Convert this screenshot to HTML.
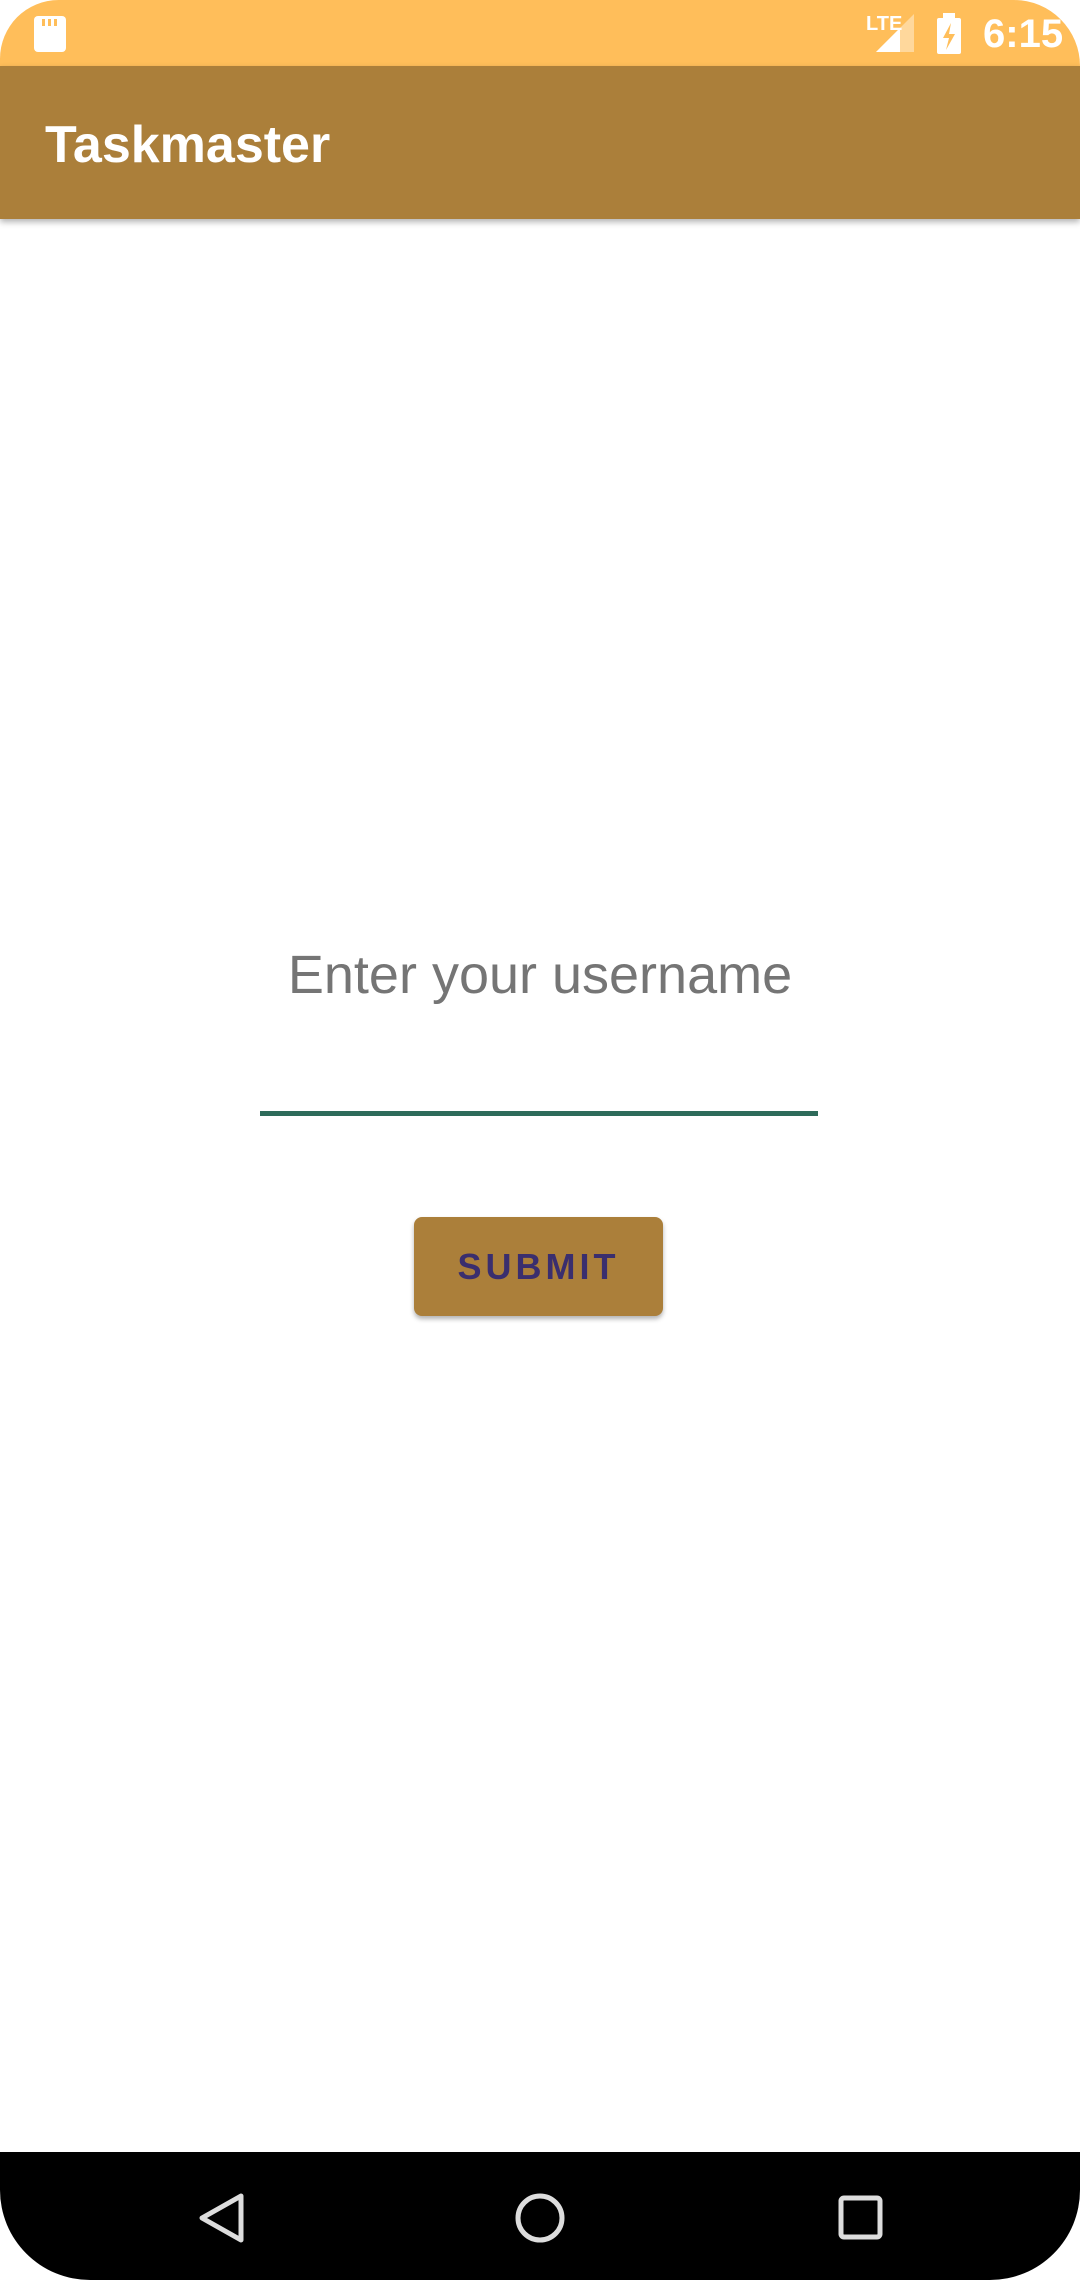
<!DOCTYPE html>
<html><head><meta charset="utf-8"><style>
html,body{margin:0;padding:0;background:#fff;}
body{width:1080px;height:2280px;position:relative;overflow:hidden;font-family:"Liberation Sans",sans-serif;}
.status{position:absolute;left:0;top:0;width:1080px;height:66px;background:#ffbe5a;border-radius:80px 90px 0 0;overflow:hidden;}
.appbar{position:absolute;left:0;top:66px;width:1080px;height:153px;background:#ab7f3a;box-shadow:0 3px 6px rgba(0,0,0,0.3);}
.title{position:absolute;left:45px;top:115px;color:#fff;font-size:52px;font-weight:bold;line-height:60px;}
.hint{position:absolute;left:0;width:1080px;top:945px;text-align:center;color:#757575;font-size:54px;line-height:60px;}
.line{position:absolute;left:260px;top:1111px;width:558px;height:5px;background:#2e6b5a;}
.btn{position:absolute;left:414px;top:1217px;width:249px;height:99px;background:#ab7f3a;border-radius:8px;box-shadow:0 3px 5px rgba(0,0,0,0.3);color:#3a2e6e;font-size:36px;font-weight:bold;letter-spacing:4px;text-align:center;line-height:99px;}
.nav{position:absolute;left:0;top:2152px;width:1080px;height:128px;background:#000;border-radius:0 0 90px 90px;}
</style></head><body>
<div class="status">
<svg width="1080" height="66" style="position:absolute;left:0;top:0">
<rect x="34" y="16" width="32" height="36" rx="4" fill="#fff"/>
<rect x="42" y="19" width="3" height="7" fill="#ffbe5a"/><rect x="48" y="19" width="3" height="7" fill="#ffbe5a"/><rect x="54" y="19" width="3" height="7" fill="#ffbe5a"/>
<text x="866" y="30" font-family="Liberation Sans" font-weight="bold" font-size="20" fill="#fff">LTE</text>
<polygon points="876,52 914,52 914,14" fill="#fff" opacity="0.4"/>
<polygon points="876,52 900,52 900,28" fill="#fff"/>
<rect x="937" y="18" width="24" height="36" rx="2" fill="#fff"/><rect x="943" y="13" width="12" height="6" fill="#fff"/>
<polygon points="951,23 943,38 949,38 946,50 955,34 949,34" fill="#ffbe5a"/>
<text x="983" y="47" font-family="Liberation Sans" font-weight="bold" font-size="40" fill="#fff">6:15</text>
</svg>
</div>
<div class="appbar"></div>
<div class="title">Taskmaster</div>
<div class="hint">Enter your username</div>
<div class="line"></div>
<div class="btn">SUBMIT</div>
<div class="nav">
<svg width="1080" height="128">
<polygon points="241,2191 241,2235 202,2213" transform="translate(0,-2147)" fill="none" stroke="#ddd" stroke-width="5" stroke-linejoin="round"/>
<circle cx="540" cy="66" r="22" fill="none" stroke="#ddd" stroke-width="5"/>
<rect x="841" y="46" width="39" height="39" rx="3" fill="none" stroke="#ddd" stroke-width="5"/>
</svg>
</div>
</body></html>
